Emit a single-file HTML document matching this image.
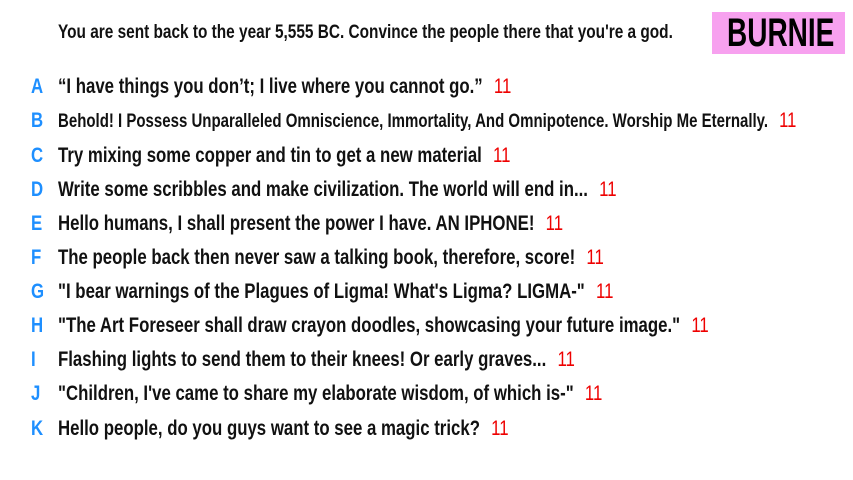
<!DOCTYPE html>
<html><head><meta charset="utf-8"><style>
html,body{margin:0;padding:0;width:853px;height:480px;background:#fff;overflow:hidden}
body{font-family:"Liberation Sans Narrow","Liberation Sans",sans-serif;color:#111;position:relative}
.t{position:absolute;white-space:nowrap;transform-origin:0 50%;transform:scaleX(0.8);font-size:21px;line-height:24px;font-weight:bold}
.l{position:absolute;left:31px;color:#1e8fff;font-size:21px;line-height:24px;transform:scaleX(0.8);transform-origin:0 50%;font-weight:bold}
.n{color:#e00;margin-left:14px;font-weight:normal}
#q{left:58px;top:21px;font-size:19px;transform:scaleX(0.81)}
#b{position:absolute;left:712px;top:12px;width:133px;height:42px;background:#f7a1ef;overflow:hidden}
#b span{position:absolute;left:15px;top:0;color:#000;font-size:40px;line-height:42px;font-weight:bold;white-space:nowrap;transform:scaleX(0.7);transform-origin:0 50%}
</style></head><body>
<div class="t" id="q">You are sent back to the year 5,555 BC. Convince the people there that you're a god.</div>
<div id="b"><span>BURNIE</span></div>
<div class="l" style="top:75px">A</div><div class="t" style="left:58px;top:75px">“I have things you don’t; I live where you cannot go.”<span class="n">11</span></div>
<div class="l" style="top:109px">B</div><div class="t" style="left:58px;top:109px;font-size:19px;transform:scaleX(0.79)">Behold! I Possess Unparalleled Omniscience, Immortality, And Omnipotence. Worship Me Eternally.<span class="n" style="font-size:21px">11</span></div>
<div class="l" style="top:144px">C</div><div class="t" style="left:58px;top:144px">Try mixing some copper and tin to get a new material<span class="n">11</span></div>
<div class="l" style="top:178px">D</div><div class="t" style="left:58px;top:178px">Write some scribbles and make civilization. The world will end in...<span class="n">11</span></div>
<div class="l" style="top:212px">E</div><div class="t" style="left:58px;top:212px">Hello humans, I shall present the power I have. AN IPHONE!<span class="n">11</span></div>
<div class="l" style="top:246px">F</div><div class="t" style="left:58px;top:246px">The people back then never saw a talking book, therefore, score!<span class="n">11</span></div>
<div class="l" style="top:280px">G</div><div class="t" style="left:58px;top:280px">"I bear warnings of the Plagues of Ligma! What's Ligma? LIGMA-"<span class="n">11</span></div>
<div class="l" style="top:314px">H</div><div class="t" style="left:58px;top:314px">"The Art Foreseer shall draw crayon doodles, showcasing your future image."<span class="n">11</span></div>
<div class="l" style="top:348px">I</div><div class="t" style="left:58px;top:348px">Flashing lights to send them to their knees! Or early graves...<span class="n">11</span></div>
<div class="l" style="top:382px">J</div><div class="t" style="left:58px;top:382px">"Children, I've came to share my elaborate wisdom, of which is-"<span class="n">11</span></div>
<div class="l" style="top:417px">K</div><div class="t" style="left:58px;top:417px">Hello people, do you guys want to see a magic trick?<span class="n">11</span></div>
</body></html>
